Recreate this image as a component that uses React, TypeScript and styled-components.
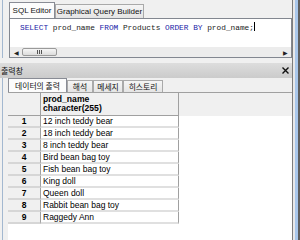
import React from "react";
import styled, { createGlobalStyle } from "styled-components";

const Global = createGlobalStyle`
  body {
    margin: 0;
    background: #f0f0f0;
  }
`;

const Window = styled.div`
  width: 300px;
  height: 240px;
  display: flex;
  overflow: hidden;
  background: #f0f0f0;
  font-family: "Liberation Sans", Arial, sans-serif;
  color: #000;
`;
const Content = styled.div`
  flex: 1;
  min-width: 0;
  display: flex;
  flex-direction: column;
`;
const RightEdge = styled.div`
  width: 7px;
  border-left: 1px solid #7d7d7d;
  background: linear-gradient(
    to right,
    #e9e9e9 0 2px,
    #a9c7eb 2px 5px,
    #5f5f5f 5px
  );
`;

const EditorPane = styled.div`
  margin-left: 2px;
  border-left: 1px solid #a3b8d0;
  padding-left: 6px;
  display: flex;
  flex-direction: column;
`;
const TabRow = styled.div<{ $h: number }>`
  height: ${(p) => p.$h}px;
  display: flex;
  align-items: flex-end;
`;
const Tab = styled.div<{ $active?: boolean; $h: number; $w: number; $kr?: boolean }>`
  box-sizing: border-box;
  width: ${(p) => p.$w}px;
  height: ${(p) => (p.$active ? p.$h : p.$h - 2)}px;
  border: 1px solid ${(p) => (p.$active ? "#898c95" : "#a9a9a9")};
  border-bottom: none;
  background: ${(p) =>
    p.$active ? "#fcfcfc" : "linear-gradient(#f5f5f5, #e4e4e4)"};
  display: flex;
  align-items: center;
  justify-content: center;
  font-family: ${(p) =>
    p.$kr
      ? '"Noto Sans CJK KR", "Liberation Sans", sans-serif'
      : '"Liberation Sans", Arial, sans-serif'};
  font-size: ${(p) => (p.$kr ? 7.8 : 8)}px;
  white-space: nowrap;
  color: #111;
`;

const Editor = styled.div`
  box-sizing: border-box;
  height: 40px;
  border: 1px solid #828790;
  background: #fff;
  display: flex;
  flex-direction: column;
`;
const Code = styled.div`
  flex: 1;
  padding: 3px 0 0 10px;
  font-family: "Liberation Mono", "Courier New", monospace;
  font-size: 7.8px;
  line-height: 10px;
  color: #222;
  white-space: pre;
`;
const Kw = styled.span`
  color: #1a1aa6;
`;
const Caret = styled.span`
  display: inline-block;
  width: 1px;
  height: 9px;
  background: #000;
  vertical-align: -1px;
`;
const HScroll = styled.div`
  height: 10px;
  display: flex;
  align-items: stretch;
  background: #ececec;
`;
const Arrow = styled.div`
  width: 12px;
  display: flex;
  align-items: center;
  justify-content: center;
  font-size: 6px;
  color: #222;
`;
const Thumb = styled.div`
  box-sizing: border-box;
  width: 35px;
  margin: 1px 0;
  border: 1px solid #9a9a9a;
  border-radius: 2px;
  background: linear-gradient(#f6f6f6, #dcdcdc);
  display: flex;
  align-items: center;
  justify-content: center;
  gap: 1px;
`;
const Grip = styled.span`
  width: 1px;
  height: 4px;
  background: #555;
`;
const Track = styled.div`
  flex: 1;
`;

const Splitter = styled.div`
  height: 5px;
`;

const OutHeader = styled.div`
  height: 15px;
  display: flex;
  align-items: center;
  justify-content: space-between;
  padding: 0 3px 0 1px;
  background: linear-gradient(#dddddd, #cbcbcb);
  font-family: "Noto Sans CJK KR", "Liberation Sans", sans-serif;
  font-size: 8px;
  color: #111;
`;

const OutputPane = styled.div`
  flex: 1;
  min-height: 0;
  margin-left: 2px;
  border-left: 1px solid #a3b8d0;
  padding-left: 5px;
  display: flex;
  flex-direction: column;
`;

const Grid = styled.div`
  flex: 1;
  background: #fff;
  border-top: 1px solid #a0a0a0;
  display: flex;
  flex-direction: column;
  font-size: 8.5px;
`;
const HeadBand = styled.div`
  box-sizing: border-box;
  height: 23px;
  display: flex;
  background: #f0f0f0;
`;
const Corner = styled.div`
  box-sizing: border-box;
  width: 33px;
  border-right: 1px solid #a0a0a0;
  border-bottom: 1px solid #a0a0a0;
`;
const ColHead = styled.div`
  box-sizing: border-box;
  width: 138px;
  padding: 2px 0 0 2px;
  border-right: 1px solid #a0a0a0;
  border-bottom: 1px solid #a0a0a0;
  font-weight: bold;
  font-size: 8.6px;
  line-height: 9px;
`;
const Row = styled.div`
  height: 12px;
  display: flex;
`;
const RowNum = styled.div`
  box-sizing: border-box;
  width: 33px;
  background: #f0f0f0;
  border-right: 1px solid #a0a0a0;
  border-bottom: 2px solid #d6d6d6;
  display: flex;
  align-items: center;
  justify-content: center;
  font-weight: bold;
`;
const Cell = styled.div`
  box-sizing: border-box;
  width: 138px;
  padding-left: 2px;
  border-right: 1px solid #a0a0a0;
  border-bottom: 2px solid #e0e0e0;
  display: flex;
  align-items: center;
  white-space: nowrap;
`;

const rows = [
  "12 inch teddy bear",
  "18 inch teddy bear",
  "8 inch teddy bear",
  "Bird bean bag toy",
  "Fish bean bag toy",
  "King doll",
  "Queen doll",
  "Rabbit bean bag toy",
  "Raggedy Ann",
];

function CloseIcon() {
  return (
    <svg width="7" height="7" viewBox="0 0 7 7">
      <path d="M0.5 0.5L6.5 6.5M6.5 0.5L0.5 6.5" stroke="#111" strokeWidth="1.4" />
    </svg>
  );
}

export default function App() {
  return (
    <Window>
      <Global />
      <Content>
        <EditorPane>
          <TabRow $h={18}>
            <Tab $active $h={16} $w={46}>SQL Editor</Tab>
            <Tab $h={16} $w={89}>Graphical Query Builder</Tab>
          </TabRow>
          <Editor>
            <Code>
              <Kw>SELECT</Kw> prod_name <Kw>FROM</Kw> Products <Kw>ORDER BY</Kw> prod_name;
              <Caret />
            </Code>
            <HScroll>
              <Arrow>◀</Arrow>
              <Thumb>
                <Grip />
                <Grip />
                <Grip />
              </Thumb>
              <Track />
              <Arrow>▶</Arrow>
            </HScroll>
          </Editor>
        </EditorPane>
        <Splitter />
        <OutHeader>
          <span>출력창</span>
          <CloseIcon />
        </OutHeader>
        <OutputPane>
          <TabRow $h={14}>
            <Tab $active $kr $h={14} $w={59}>데이터의 출력</Tab>
            <Tab $kr $h={14} $w={26}>해석</Tab>
            <Tab $kr $h={14} $w={30}>메세지</Tab>
            <Tab $kr $h={14} $w={40}>히스토리</Tab>
          </TabRow>
          <Grid>
            <HeadBand>
              <Corner />
              <ColHead>
                prod_name
                <br />
                character(255)
              </ColHead>
            </HeadBand>
            {rows.map((r, i) => (
              <Row key={r}>
                <RowNum>{i + 1}</RowNum>
                <Cell>{r}</Cell>
              </Row>
            ))}
          </Grid>
        </OutputPane>
      </Content>
      <RightEdge />
    </Window>
  );
}
